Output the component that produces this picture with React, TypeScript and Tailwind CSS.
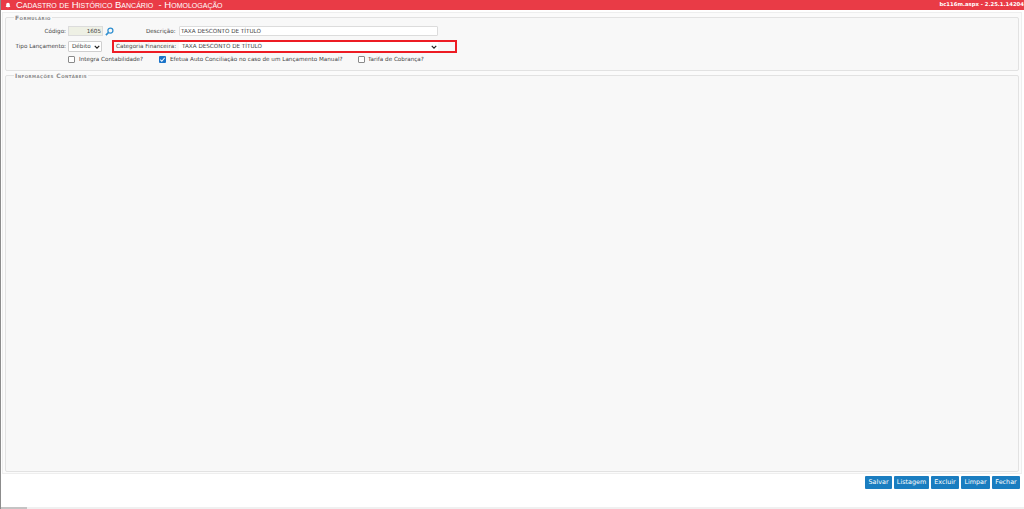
import React from "react";

const font = { fontFamily: '"DejaVu Sans", sans-serif' };

function Box({ checked }: { checked?: boolean }) {
  return checked ? (
    <span className="w-[7px] h-[7px] bg-[#1a73c9] rounded-[1px] flex items-center justify-center">
      <svg viewBox="0 0 8 8" className="w-[7px] h-[7px]"><path d="M1.5 4.2 3.2 6 6.5 2" fill="none" stroke="#fff" strokeWidth="1.2" /></svg>
    </span>
  ) : (
    <span className="w-[7px] h-[7px] bg-white border border-[#8a8a8a] rounded-[1px]" />
  );
}

function Chevron() {
  return (
    <svg viewBox="0 0 8 5" className="w-[6px] h-[4px]"><path d="M1 1 4 4 7 1" fill="none" stroke="#222" strokeWidth="1.6" /></svg>
  );
}

function Legend({ children }: { children: React.ReactNode }) {
  return (
    <div className="absolute left-[8px] top-[-3px] bg-[#f9f9f9] px-[1px] text-[6px] leading-[6px] font-bold tracking-[0.45px] text-[#8a8a8a] [font-variant:small-caps]">
      {children}
    </div>
  );
}

const buttons: [string, string][] = [
  ["Salvar", "w-[27px]"],
  ["Listagem", "w-[35px]"],
  ["Excluir", "w-[28px]"],
  ["Limpar", "w-[29px]"],
  ["Fechar", "w-[28px]"],
];

export default function App() {
  return (
    <div style={font} className="relative w-[1024px] h-[509px] bg-white flex flex-col overflow-hidden border-l border-l-[#8c8c8c] text-[5.65px] text-[#444]">
      <header className="h-[10px] shrink-0 bg-[#e93b46] flex items-center justify-between text-white">
        <div className="flex items-center pl-[4px] gap-[5px]">
          <svg viewBox="0 0 10 10" className="w-[6px] h-[7px]"><path d="M5 .5C3 .5 2 2 2 4v2L1 7.5h8L8 6V4C8 2 7 .5 5 .5ZM4 8.3h2L5 9.6Z" fill="#fff" /></svg>
          <span className="text-[9.5px] leading-[10px] [font-variant:small-caps] whitespace-pre" style={{ fontFamily: '"Liberation Sans", sans-serif' }}>Cadastro de Histórico Bancário  - Homologação</span>
        </div>
        <span className="text-[5.3px] font-bold whitespace-nowrap">bc116m.aspx - 2.25.1.14204</span>
      </header>

      <main className="flex-1 flex flex-col min-h-0">
        <div className="mt-[2px] ml-[1px] w-[1020px] h-[462px] border border-[#eeeeee] bg-[#fbfbfb] pl-[2px] pr-[2px] pt-[4px] flex flex-col gap-[4px]">
          <section className="relative h-[54px] shrink-0 border border-[#e2e2e2] rounded-[2px] bg-[#f8f8f8]">
            <Legend>Formulário</Legend>
            <div className="flex items-center h-[10px] mt-[8px]">
              <span className="w-[60px] text-right leading-[10px]">Código:</span>
              <span className="ml-[2px] w-[35px] h-[10px] bg-[#eef0e4] border border-[#dcdcdc] text-right pr-[1px] leading-[8px]">1605</span>
              <svg viewBox="0 0 10 10" className="ml-[2px] w-[9px] h-[9px]"><circle cx="6" cy="4" r="2.8" fill="none" stroke="#2f8fd0" strokeWidth="1.4" /><path d="M4 6 1 9" stroke="#2f8fd0" strokeWidth="1.8" /></svg>
              <span className="ml-[32px] w-[31px] leading-[10px] whitespace-nowrap">Descrição:</span>
              <span className="ml-[2px] w-[259px] h-[10px] bg-white border border-[#dcdcdc] rounded-[1px] pl-[1px] leading-[8px] whitespace-nowrap">TAXA DESCONTO DE TÍTULO</span>
            </div>
            <div className="flex items-center h-[13px] mt-[4px]">
              <span className="w-[60px] text-right whitespace-nowrap">Tipo Lançamento:</span>
              <span className="ml-[2px] w-[34px] h-[11px] bg-white border border-[#cfcfcf] rounded-[1px] flex items-center justify-between pl-[3px] pr-[1px]">Débito<Chevron /></span>
              <div className="ml-[10px] w-[345px] h-[13px] border-2 border-[#ed1c24] flex items-center">
                <span className="ml-[2px] w-[61px] whitespace-nowrap">Categoria Financeira:</span>
                <span className="ml-[2px] w-[259px] h-[9px] bg-white flex items-center justify-between pl-[3px] pr-[1px] whitespace-nowrap">TAXA DESCONTO DE TÍTULO<Chevron /></span>
              </div>
            </div>
            <div className="flex items-center h-[9px] mt-[2px] pl-[62px]">
              <label className="w-[91px] flex items-center gap-[4px]"><Box /><span className="whitespace-nowrap">Integra Contabilidade?</span></label>
              <label className="w-[199px] flex items-center gap-[4px]"><Box checked /><span className="whitespace-nowrap">Efetua Auto Conciliação no caso de um Lançamento Manual?</span></label>
              <label className="flex items-center gap-[3px]"><Box /><span className="whitespace-nowrap">Tarifa de Cobrança?</span></label>
            </div>
          </section>
          <section className="relative h-[397px] shrink-0 border border-[#e2e2e2] rounded-[2px] bg-[#f8f8f8]">
            <Legend>Informações Contábeis</Legend>
          </section>
        </div>
      </main>

      <footer className="absolute right-[4px] top-[476px] flex gap-[2px]">
        {buttons.map(([b, w]) => (
          <span key={b} className={`${w} h-[13px] bg-[#1a7dc0] rounded-[1px] text-white text-[6.4px] flex items-center justify-center`}>{b}</span>
        ))}
      </footer>
      <div className="absolute left-0 top-[507px] w-[1024px] h-[2px] bg-[#f0f0f0]"><div className="w-[26px] h-[2px] bg-[#c4c4c4]" /></div>
    </div>
  );
}
